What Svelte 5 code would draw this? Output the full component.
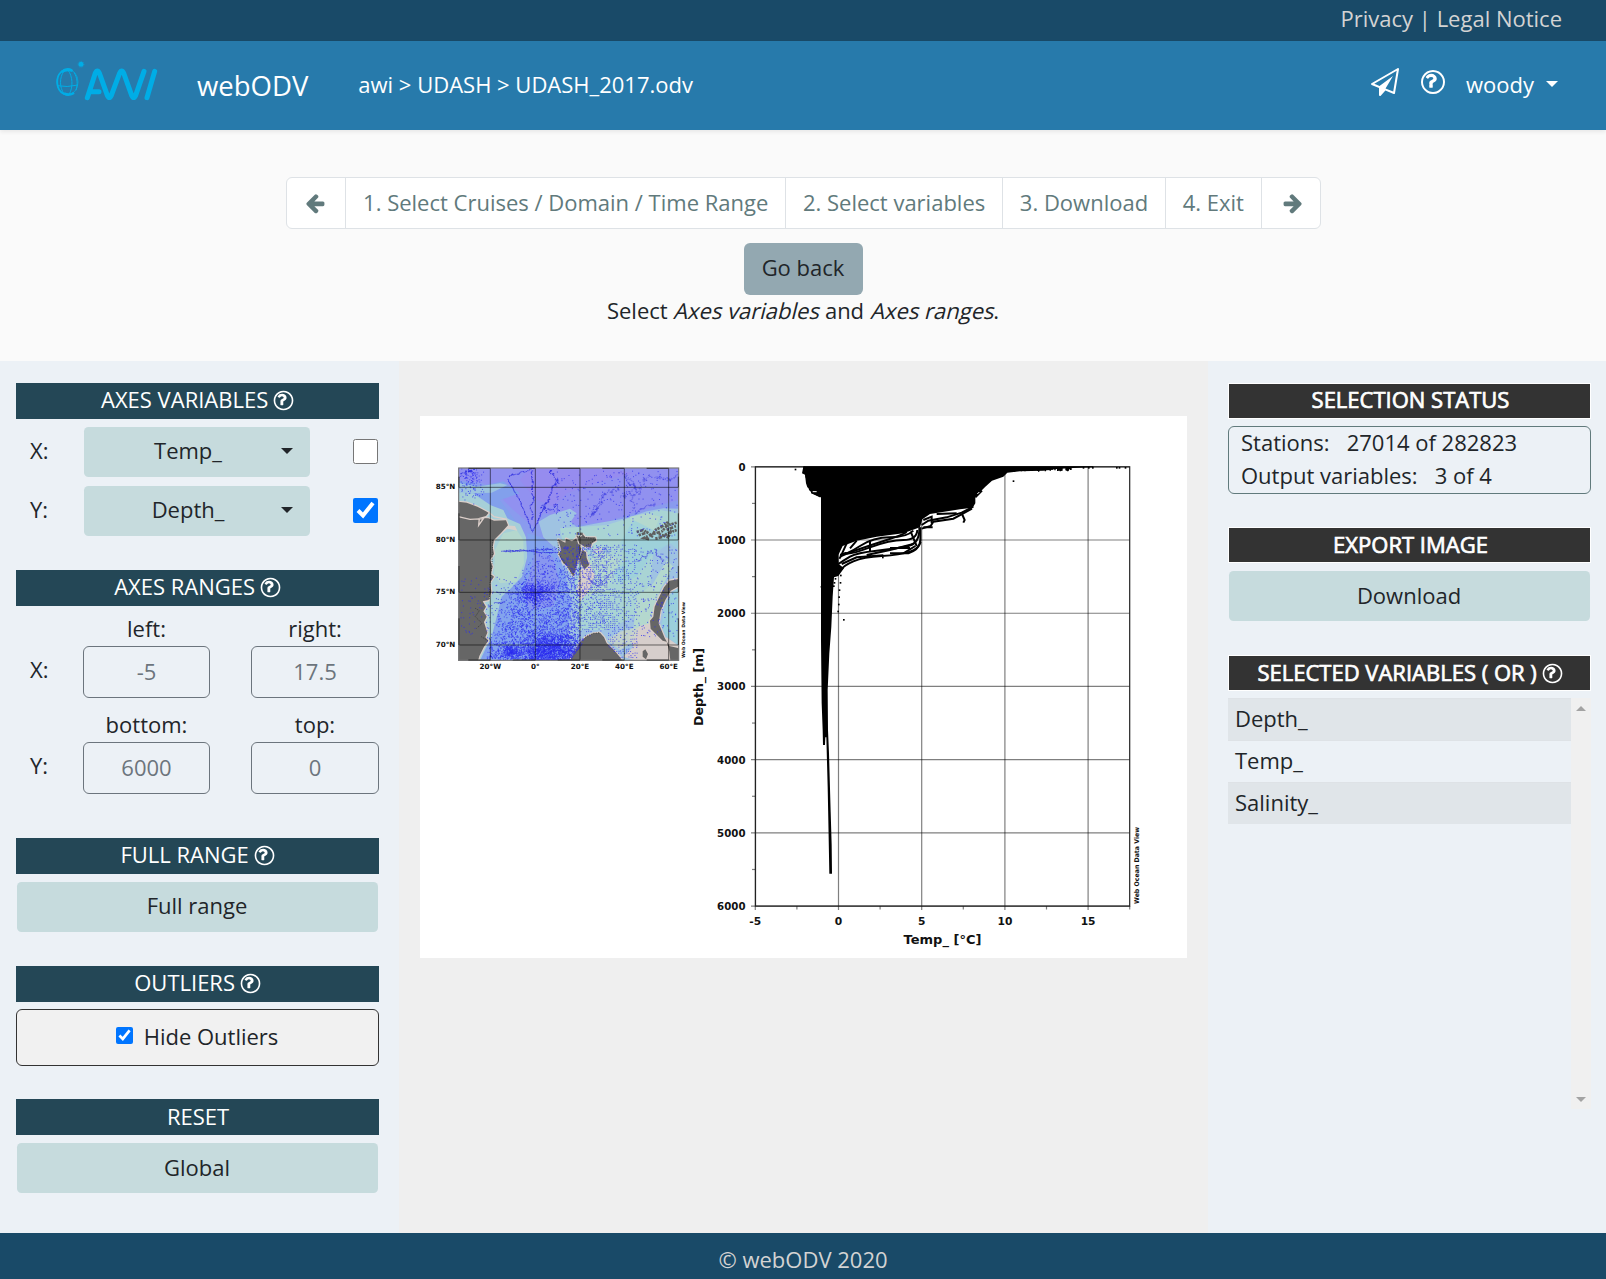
<script>
  const steps = ['1. Select Cruises / Domain / Time Range', '2. Select variables', '3. Download', '4. Exit'];
  const variables = ['Depth_', 'Temp_', 'Salinity_'];

  const depthTicks = [0, 1000, 2000, 3000, 4000, 5000, 6000];
  const tempTicks = [-5, 0, 5, 10, 15];
  const depthY = (d) => 466.8 + (d / 6000) * 439.3;
  const tempX = (t) => 755.3 + ((t + 5) / 22.5) * 374.4;

  const lats = [[85, 112], [80, 270], [75, 427], [70, 585]];
  const lons = [['20°W', 211], ['0°', 346], ['20°E', 480], ['40°E', 613], ['60°E', 746]];

  // Deterministic generator so that the station dots are stable between renders.
  let seed = 1234567;
  function rnd() {
    seed = (seed * 1103515245 + 12345) % 2147483648;
    return seed / 2147483648;
  }
  const gauss = () => rnd() + rnd() + rnd() - 1.5;
  const dot = (x, y) => `M${x.toFixed(1)} ${y.toFixed(1)}h3`;

  function scatter(n, x0, y0, x1, y1, keep) {
    let d = '';
    for (let i = 0; i < n; i++) {
      const x = x0 + rnd() * (x1 - x0);
      const y = y0 + rnd() * (y1 - y0);
      if (!keep || rnd() < keep(x, y)) d += dot(x, y);
    }
    return d;
  }
  function cluster(n, cx, cy, sx, sy) {
    let d = '';
    for (let i = 0; i < n; i++) d += dot(cx + gauss() * sx, Math.min(629, cy + gauss() * sy));
    return d;
  }
  function track(x, y, dx, dy, n, wobble) {
    let d = '';
    for (let i = 0; i < n; i++) {
      x += dx + (rnd() - 0.5) * wobble;
      y += dy + (rnd() - 0.5) * wobble;
      d += dot(x, y);
    }
    return d;
  }
  // Regular survey grid of the Barents Sea.
  function survey() {
    let d = '';
    for (let x = 468; x < 650; x += 6)
      for (let y = 285; y < 625; y += 6)
        if (rnd() < 0.72 - Math.abs(x - 540) / 260 && (y < 545 || x > 560)) d += dot(x + rnd() * 2, y + rnd() * 2);
    return d;
  }

  const stations =
    scatter(5600, 200, 290, 480, 630, (x, y) => {
      const edge = Math.min(1, Math.max(0, (x - (330 - (y - 290) * 0.5)) / 60));
      return edge * (0.22 + (y - 290) / 480);
    }) +
    cluster(420, 345, 428, 52, 34) +
    cluster(200, 272, 604, 22, 16) +
    cluster(1500, 390, 600, 90, 48) +
    cluster(130, 150, 95, 35, 50) +
    scatter(260, 430, 290, 560, 520) +
    scatter(420, 400, 60, 770, 260, () => 0.55) +
    scatter(200, 640, 290, 770, 560) +
    scatter(150, 120, 380, 330, 560) +
    survey();

  const iceTracks =
    track(262, 84, 1.6, 3.2, 26, 3) + track(300, 160, 1.5, 2.8, 28, 3) +
    track(264, 82, 3, -0.3, 24, 5) + track(335, 60, -0.1, 3.2, 55, 6) +
    track(385, 58, 1.2, 1.3, 25, 8) + track(412, 90, -0.9, 2, 42, 7) +
    track(370, 172, 1, 0.3, 30, 12) + track(335, 245, 0.8, -2, 36, 4) +
    track(240, 304, 3.4, 0, 50, 2) + track(250, 302, 3.4, 0, 42, 3) +
    track(225, 427, 3.4, 0, 64, 2) + track(220, 460, 3, -0.1, 12, 3) +
    track(120, 70, 2, 0.2, 24, 9);

  const thinTracks =
    track(590, 62, 1.2, 1.2, 40, 10) + track(690, 80, -1.6, 0.9, 60, 10) +
    track(600, 120, -1.2, 0.7, 60, 9) + track(540, 160, -0.3, 1.3, 50, 8) +
    track(612, 70, -0.2, 2, 60, 8) + track(640, 195, 1.6, -1, 35, 7) +
    track(700, 80, 1.6, 0.4, 45, 8) + track(695, 300, -1.4, 1.4, 30, 5) +
    track(705, 300, 1.1, 1.5, 30, 5) + track(575, 365, -1.2, 1.4, 24, 4) +
    track(505, 385, 1.3, 1.1, 20, 4);

  function fringe() {
    let d = '';
    for (let i = 0; i < 60; i++) d += `M${(960 + rnd() * 190).toFixed(0)} 84v${(3 + rnd() * 8).toFixed(0)}`;
    for (let i = 0; i < 36; i++) d += `M${(338 + i * 0.5 + rnd() * 5).toFixed(0)} ${82 + i * 2}h5`;
    return d;
  }
  const fringePath = fringe();
  const outliers = [[316, 88], [970, 123], [452, 406], [451, 428], [448, 450], [447, 471], [446, 493], [444, 514], [461, 539],
    [1180, 83], [1196, 83], [1208, 83], [1280, 83], [1288, 83], [1306, 83], [394, 440], [395, 380], [431, 438], [433, 428], [436, 416], [641, 272], [578, 352]];

  const land = [
    'M110 155L140 158L172 170L206 188L198 198L176 204L205 205L222 212L258 211L264 226L240 252L222 270L218 290L222 312L210 330L218 350L212 372L222 380L210 398L214 424L206 450L188 454L198 470L190 484L200 500L192 516L202 548L196 562L205 572L192 590L178 618L172 640H110Z',
    'M414 268L436 278L438 266L456 274L470 264L484 272L480 290L490 304L484 320L474 330L470 345L460 378L450 362L440 346L430 340L416 312L424 300Z',
    'M470 258L484 262L488 252L496 262L526 262L528 272L516 280L512 292L494 290L478 280ZM486 300L498 306L500 324L508 344L494 358L484 344L480 324Z',
    'M446 640L462 608L480 578L498 560L520 550L540 548L552 562L560 580L582 600L600 622L612 640Z',
    'M782 640H752L748 604L740 575L728 572L692 536L690 512L700 500L704 470L718 440L732 412L748 392L782 386V406L752 422L736 450L722 482L716 520L734 564L748 588L782 596ZM668 604L676 598L684 612L678 628L668 620Z',
  ];
</script>

{#snippet help(cls)}
  <svg class={cls} viewBox="0 0 1792 1792" aria-hidden="true"><path fill="currentColor" d="M880 1072v160q0 14-9 23t-23 9h-160q-14 0-23-9t-9-23v-160q0-14 9-23t23-9h160q14 0 23 9t9 23zM1136 672q0 50-15 90t-45.500 69-52 44-59.500 36q-32 18-46.500 28t-26 24-11.500 29v32q0 14-9 23t-23 9h-160q-14 0-23-9t-9-23v-68q0-35 10.500-64.500t24-47.500 39-35.500 41-25.500 44.500-21q53-25 75-43t22-49q0-42-43.500-71.500t-95.500-29.500q-56 0-95 27-29 20-80 83-9 12-25 12-11 0-19-6l-108-82q-10-7-12-20t5-23q122-192 349-192 129 0 238.500 89.500t109.500 214.500zM896 256q-130 0-248.500 51t-204 136.500-136.500 204-51 248.500 51 248.500 136.500 204 204 136.500 248.500 51 248.500-51 204-136.500 136.500-204 51-248.500-51-248.500-136.500-204-204-136.500-248.500-51zM1664 896q0 209-103 385.500t-279.500 279.500-385.500 103-385.500-103-279.500-279.500-103-385.500 103-385.500 279.500-279.500 385.500-103 385.500 103 279.500 279.500 103 385.500z" /></svg>
{/snippet}

{#snippet arrow(cls)}
  <svg class="arrow {cls}" viewBox="0 0 1792 1792" aria-hidden="true"><path fill="currentColor" d="M1664 896v128q0 53-32.500 90.500t-84.500 37.500h-704l293 294q38 36 38 90t-38 90l-75 76q-37 37-90 37-52 0-91-37l-651-652q-37-37-37-90 0-52 37-91l651-650q38-38 91-38 52 0 90 38l75 74q38 38 38 91t-38 91l-293 293h704q52 0 84.500 37.500t32.500 90.500z" /></svg>
{/snippet}

<div class="page">
  <div class="topbar"><span>Privacy | Legal Notice</span></div>

  <header class="nav">
    <svg class="logo" viewBox="0 0 345 165" aria-label="AWI">
      <g fill="none" stroke="#00ade6">
        <ellipse cx="52" cy="81" rx="32" ry="39" stroke-width="2" />
        <path stroke-width="5" d="M66 45A32 39 0 1 0 72 113" />
        <path stroke-width="3" d="M42 48C28 66 28 98 42 116M54 46C68 62 70 96 58 117M72 52C82 68 84 88 78 106M22 92Q50 98 84 90" />
        <path stroke-width="7" d="M34 51Q52 41 68 48M42 115Q58 122 72 114" />
        <circle cx="93" cy="28" r="7.500" fill="#00ade6" stroke="none" />
        <circle cx="93" cy="28" r="9" stroke-width="1.500" stroke-dasharray="3 3" />
        <path stroke-width="15" stroke-linecap="round" stroke-linejoin="round" d="M112 128L136 54Q142 42 148 54L172 121Q178 134 184 121L209 54Q215 42 221 54L245 121Q251 134 257 121L282 49M124 110H147M314 49L291 128" />
      </g>
    </svg>
    <span class="brand">webODV</span>
    <span class="crumbs">awi &gt; UDASH &gt; UDASH_2017.odv</span>
    <div class="tools">
      <svg class="plane" viewBox="0 0 1792 1792" aria-hidden="true"><path fill="currentColor" d="M1764 11q33 24 27 64l-256 1536q-5 29-32 45-14 8-31 8-11 0-24-5l-527-215-298 327q-18 21-47 21-14 0-23-4-19-7-30-23.500t-11-36.500v-452l-472-193q-37-14-40-55-3-39 32-59l1664-960q35-21 68 2zM1422 1505l221-1323-1434 827 336 137 863-639-478 797z" /></svg>
      {@render help('nav-help')}
      <span class="user">woody</span>
      <i class="caret"></i>
    </div>
  </header>

  <section class="wizard">
    <div class="pager">
      <span class="step end prev">{@render arrow('')}</span>
      {#each steps as s}<span class="step">{s}</span>{/each}
      <span class="step end next">{@render arrow('flip')}</span>
    </div>
    <button class="back">Go back</button>
    <p class="hint">Select <em>Axes variables</em> and <em>Axes ranges</em>.</p>
  </section>

  <main>
    <aside class="left">
      <h2>AXES VARIABLES {@render help('hq')}</h2>
      <div class="var-row">
        <span>X:</span>
        <button class="btn">Temp_<i class="caret"></i></button>
        <input type="checkbox" class="big" />
      </div>
      <div class="var-row second">
        <span>Y:</span>
        <button class="btn">Depth_<i class="caret"></i></button>
        <input type="checkbox" class="big" checked />
      </div>

      <h2 class="ranges-head">AXES RANGES {@render help('hq')}</h2>
      <div class="range">
        <span></span><label for="xl">left:</label><label for="xr">right:</label>
        <span class="axis">X:</span><input id="xl" placeholder="-5" /><input id="xr" placeholder="17.5" />
      </div>
      <div class="range">
        <span></span><label for="yb">bottom:</label><label for="yt">top:</label>
        <span class="axis">Y:</span><input id="yb" placeholder="6000" /><input id="yt" placeholder="0" />
      </div>

      <h2 class="full-head">FULL RANGE {@render help('hq')}</h2>
      <button class="btn wide">Full range</button>

      <h2 class="gap">OUTLIERS {@render help('hq')}</h2>
      <label class="outliers"><input type="checkbox" checked /><span>Hide Outliers</span></label>

      <h2 class="reset-head">RESET</h2>
      <button class="btn wide low">Global</button>
    </aside>

    <div class="canvas">
      <svg class="plot" viewBox="420 416 767 542">
        <rect x="420" y="416" width="767" height="542" fill="#fff" />

        <g transform="translate(420 450) scale(.33333)">
          <clipPath id="mapclip"><rect x="115" y="54" width="662" height="578" /></clipPath>
          <g clip-path="url(#mapclip)">
            <rect x="115" y="54" width="662" height="578" fill="#8a9bee" />
            <path fill="#9191f0" d="M115 54H777V150L700 170L640 190L560 215L470 225L420 200L370 190L345 235L322 215L280 180L240 140L190 100L115 90Z" />
            <path fill="#9a88ee" d="M330 54H560L640 70L560 90L440 130L400 170L350 150L300 90Z" opacity=".6" />
            <path fill="#82a0ec" d="M115 92L180 108L250 94L300 130L240 150L300 230L318 280L320 330L300 420L240 500L230 632H115Z" />
            <path fill="#9dc4e0" d="M115 98L170 110L240 100L262 105L215 128L160 130L240 185L290 235L115 170Z" />
            <path fill="#a6cfd8" d="M115 128L160 132L210 165L250 180L262 205L300 222L318 262L322 320L306 380L270 418L245 440L230 500L215 560L195 600L180 632H115Z" />
            <path fill="#83a4ee" d="M322 250L365 262L420 310L452 400L470 480L455 560L430 632H190L205 590L240 500L262 440L305 400L322 340Z" />
            <path fill="#8c8ff0" d="M345 300L400 320L420 400L400 470L330 480L310 420L330 370Z" opacity=".6" />
            <path fill="#9fc3e2" d="M356 215L390 195L450 176L470 190L452 215L470 232L540 218L620 205L680 184L730 175L777 176V632H470L440 560L455 470L438 380L412 300L370 262Z" />
            <path fill="#a9d4d4" d="M420 235L560 225L640 200L720 180L777 190V270L700 300L690 420L640 500L560 540L470 540L462 420L470 370L430 290Z" />
            <path fill="#b4d8ce" d="M225 300L250 250L290 240L310 270L312 340L290 395L240 400L222 370ZM630 200L680 190L720 200L700 250L640 250ZM650 440L700 400L740 330L760 350L720 420L700 520L640 540ZM480 360L540 300L600 330L560 420L500 440Z" />
            <path fill="#9bd0dc" d="M640 210L600 280L620 330L580 370L600 400L650 380L690 320L750 280L777 300V220L720 250Z" opacity=".75" />
            <path fill="#dccfca" d="M740 562L777 588V632H650L610 620L640 590L625 560L660 528L690 520L728 572ZM480 360L510 345L525 375L505 425L480 455L470 420ZM240 225L285 228L292 242L262 236L236 258Z" opacity=".9" />
            <path fill="#c9d6c8" d="M560 570L600 545L660 530L640 575L600 600Z" opacity=".8" />
            <path fill="#9bd0dc" d="M777 414L752 432L733 480L724 530L740 560L777 586Z" />
            {#each land as d}<path {d} fill="#666" stroke="#dccfca" stroke-width="7" stroke-linejoin="round" paint-order="stroke" />{/each}
            <path fill="none" stroke="#dccfca" stroke-width="4" d="M115 200L150 208L190 206L176 226L178 205M206 186L222 200L262 208M518 308L548 302M520 300L545 294" />
            <path fill="none" stroke="#5f5f5f" stroke-width="8" stroke-dasharray="7 3 11 4 5 2" d="M650 246L670 240L692 254L672 264L690 268M694 262L706 240L722 232L744 216M700 252L726 244L742 226L770 218M706 266L730 260L742 250L770 240M656 256L684 246M716 252L744 262L756 238M740 240L768 228M470 250L488 252" />
            <path fill="none" stroke="#2a2adf" stroke-width="2" stroke-dasharray="2 3" d="M440 322L452 360M470 330L476 290M466 346L474 320M424 290L444 300" />
            <path fill="none" stroke="#333" stroke-width="2.500" stroke-dasharray="3 4" d="M218 270L216 340L210 400L208 450M166 475L178 482L166 500L186 520L170 535M184 560L204 572M446 630L480 578L498 560L520 550L540 548M414 270L416 312L450 362L460 378L470 345L490 304M470 258L528 268L494 290" />
            <path fill="none" stroke="#2c2cf0" stroke-width="3" opacity=".75" d={stations} />
            <path fill="none" stroke="#2a2ae0" stroke-width="3" opacity=".85" d={iceTracks} />
            <path fill="none" stroke="#4444e0" stroke-width="2.500" opacity=".7" d={thinTracks} />
            <path fill="#666" d="M452 632L470 605L490 582L505 568L520 556L542 558L556 584L580 604L606 632Z" />
            {#each lats as [, y]}<path stroke="#000" stroke-opacity=".65" stroke-width="2.500" d="M115 {y}H777" />{/each}
            {#each lons as [, x]}<path stroke="#000" stroke-opacity=".65" stroke-width="2.500" d="M{x} 54V632" />{/each}
          </g>
          <rect x="116" y="54" width="660" height="577" fill="none" stroke="#777" stroke-width="3.500" />
          <path fill="none" stroke="#222" stroke-width="2.500" d="M145 55H211M278 55H346M413 55H480M547 55H613M680 55H746M145 630H211M278 630H346M413 630H480M547 630H613M680 630H746M117 80V112M117 190V270M117 348V427M117 505V585M775 80V112M775 190V270M775 348V427M775 505V585" />
          <g class="axis-text" font-size="21.500">
            {#each lats as [lat, y]}<text x="106" y={y + 6} text-anchor="end">{lat}°N</text>{/each}
            {#each lons as [lon, x]}<text {x} y="658" text-anchor="middle">{lon}</text>{/each}
            <text transform="translate(795 624) rotate(-90)" font-size="13.500" textLength="168" lengthAdjust="spacingAndGlyphs">Web Ocean Data View</text>
          </g>
        </g>

        <g stroke="#000" stroke-opacity=".5" stroke-width="1.200">
          {#each depthTicks as d}<path d="M751 {depthY(d)}H1129.700" />{/each}
          {#each tempTicks as t}<path d="M{tempX(t)} 466.500V910" />{/each}
          {#each depthTicks.slice(0, 6) as d}<path d="M752 {depthY(d + 500)}H755" />{/each}
          {#each tempTicks as t}<path d="M{tempX(t + 2.5)} 906V909.500" />{/each}
        </g>
        <rect x="755.500" y="466.800" width="374.200" height="439.300" fill="none" stroke="#222" stroke-width="1.200" />

        <g transform="translate(690 440) scale(.33333)">
          <path d="M340 80L336 100L345 104L348 130L352 142L360 148L364 160L384 168L393 172L393 600L395 790L398 870L399 915L405 915L406 892L409 892L413 1040L415 1140L418 1301L426 1301L425 1215L422 1115L417 940L414 870L413 750L418 640L424 560L428 470L432 412L445 408L462 385L446 372L445 345L458 318L500 302L560 290L640 280L690 262L697 238L720 222L810 208L848 203L856 190L856 172L866 160L874 152L886 140L906 122L940 110L952 98L990 94L1060 92L1100 87L1150 84L1210 82V79H340Z" />
          <g fill="none" stroke="#000" stroke-width="6">
            <path d="M691 262V300Q690 325 660 335T575 348T490 364T455 388" />
            <path d="M688 262Q690 310 655 318T560 332T480 350T445 372" />
            <path d="M682 270Q680 300 640 300T540 322T470 340T448 356" />
            <path d="M670 272Q650 292 600 292T510 318T450 344" />
            <path d="M650 276Q640 284 590 300T500 330T450 350" />
            <path d="M662 275L680 318M600 324H660M640 340L676 318M540 300V335M500 302L480 325M470 310L452 350" />
            <path d="M600 340H655Q685 330 692 306M530 345L600 330L670 312M455 372L500 352L580 346" />
            <path d="M695 266L722 258L730 245L790 236L820 220L846 206" />
            <path d="M695 255L715 242L770 232L815 218L850 200" />
            <path d="M700 240L725 230V250M740 222L800 220M700 262H728" />
            <path d="M816 222L824 240L820 248M856 172L876 152M858 160L868 148M364 156L392 170" />
          </g>
          <path d={fringePath} stroke="#000" stroke-width="4" fill="none" />
          <path d="M368 155h12M862 162l6-6" stroke="#fff" stroke-width="3" />
          {#each outliers as [x, y]}<rect x={x - 2} y={y - 2} width="5" height="5" />{/each}
        </g>

        <g class="axis-text" font-size="10.700">
          {#each depthTicks as d}<text x="745.500" y={depthY(d) + 4} text-anchor="end" textLength={d ? 28.4 : 7.1} lengthAdjust="spacingAndGlyphs">{d}</text>{/each}
          {#each tempTicks as t}<text x={tempX(t)} y="925" text-anchor="middle">{t}</text>{/each}
          <text x="942.500" y="943.500" font-size="13" text-anchor="middle">Temp_ [°C]</text>
          <text transform="translate(703 687) rotate(-90)" font-size="13" text-anchor="middle" textLength="78" lengthAdjust="spacingAndGlyphs">Depth_ [m]</text>
          <text transform="translate(1139 904) rotate(-90)" font-size="6.500" textLength="77" lengthAdjust="spacingAndGlyphs">Web Ocean Data View</text>
        </g>
      </svg>
    </div>

    <aside class="right">
      <h3>SELECTION STATUS</h3>
      <div class="status">
        <div>Stations: &nbsp; 27014 of 282823</div>
        <div>Output variables: &nbsp; 3 of 4</div>
      </div>
      <h3 class="export">EXPORT IMAGE</h3>
      <button class="btn wide low">Download</button>
      <h3 class="selected">SELECTED VARIABLES ( OR ) {@render help('hq')}</h3>
      <div class="list">
        <div class="rows">
          {#each variables as v}<div class="row">{v}</div>{/each}
        </div>
        <div class="scroll"><i class="up"></i><i class="down"></i></div>
      </div>
    </aside>
  </main>

  <footer>© webODV 2020</footer>
</div>

<style>
  :global(body) { margin: 0; background: #fafafa; }
  .page {
    width: 1606px;
    height: 1279px;
    display: flex;
    flex-direction: column;
    overflow: hidden;
    font: 22px/33px "Open Sans", sans-serif;
    color: #212529;
  }
  .page * { box-sizing: border-box; }
  button, input { font: inherit; color: inherit; }
  .topbar {
    height: 41px;
    background: #194a68;
    color: #d3d3d3;
    display: flex;
    justify-content: flex-end;
    padding: 2px 44px 0 0;
  }
  .nav {
    height: 89px;
    flex: none;
    background: #277aab;
    color: #fff;
    display: flex;
    align-items: center;
    padding: 0 48px 0 50px;
    box-shadow: 0 2px 4px rgba(0, 0, 0, .075);
    position: relative;
  }
  .logo { width: 115px; height: 55px; margin-top: -6px; }
  .brand { font-size: 27.5px; margin-left: 32px; }
  .crumbs { margin: -2px 0 0 50px; }
  .tools { margin-left: auto; display: flex; align-items: center; }
  .plane { width: 28px; height: 28px; margin: -7px 20px 0 0; }
  .nav-help { width: 28px; height: 28px; margin: -7px 19px 0 0; }
  .caret {
    display: block;
    border: 6.5px solid transparent;
    border-top-color: currentColor;
    border-bottom: 0;
  }
  .user { margin-top: -2px; }
  .user + .caret { margin: -3px 0 0 12px; }

  .wizard {
    height: 231px;
    flex: none;
    padding-top: 47px;
    display: flex;
    flex-direction: column;
    align-items: center;
  }
  .pager {
    display: flex;
    height: 52px;
    background: #fff;
    border: 1px solid #dee2e6;
    border-radius: 6px;
    color: #617a7c;
    margin-left: 1px;
  }
  .step { padding: 0 16.8px; line-height: 49px; white-space: nowrap; }
  .step + .step { border-left: 1px solid #dee2e6; }
  .end { display: flex; align-items: center; justify-content: center; width: 58px; padding: 0; }
  .prev { padding-right: 3px; }
  .next { padding-left: 4px; width: 59px; }
  .arrow { width: 22px; height: 22px; }
  .flip { transform: scaleX(-1); }
  .back {
    margin-top: 14px;
    width: 119px;
    height: 52px;
    border: 0;
    border-radius: 6px;
    padding: 0 0 3px;
    background: #93a8b1;
  }
  .hint { margin: -1px 0 0; }
  /* The upright face is slanted, which keeps its wider letterforms. */
  .hint em { display: inline-block; font-style: normal; transform: translateX(2px) skewX(-14deg); }

  main { height: 872px; flex: none; display: flex; }
  .left { width: 399px; background: #ecf1f6; padding: 22px 20px 0 16px; }
  h2, h3 {
    margin: 0;
    height: 36px;
    font-size: 22px;
    font-weight: 400;
    line-height: 32px;
    text-align: center;
    color: #fff;
    white-space: nowrap;
  }
  h2 { background: #244756; padding-left: 1px; }
  h3 { background: #333; border: 1px solid #fff; line-height: 30px; padding-left: 2px; -webkit-text-stroke: .7px #fff; }
  .page :global(.hq) { width: 23px; height: 23px; vertical-align: -3.5px; margin-left: -2px; }
  .var-row { display: flex; align-items: center; height: 50px; margin-top: 8px; padding: 0 1px 0 14px; }
  .var-row > span { width: 54px; margin-top: -4px; }
  .var-row.second { margin-top: 9px; }
  .btn {
    position: relative;
    width: 226px;
    height: 50px;
    border: 0;
    border-radius: 4.5px;
    background: #c6dbdd;
    padding: 0 18px 3px 0;
  }
  .btn .caret { position: absolute; right: 17px; top: 21px; }
  .wide { display: block; width: calc(100% - 2px); margin: 8px 1px 0; padding: 0 1px 3px 0; }
  .low { padding-bottom: 1px; }
  .big { width: 25px; height: 25px; margin: -2px 0 0 auto; }
  .ranges-head { margin-top: 34px; }
  .range {
    display: grid;
    grid-template-columns: 67px 127px 128px;
    grid-template-rows: 34px 52px;
    height: 96px;
    padding-top: 6px;
  }
  .range > :nth-child(3n) { margin-left: 41px; width: 128px; }
  .range label { text-align: center; height: 34px; }
  .range input {
    width: 127px;
    height: 52px;
    border: 1px solid #6c757d;
    border-radius: 6px;
    background: transparent;
    text-align: center;
    padding: 0 0 2px;
  }
  .range input::placeholder { color: #6c757d; opacity: 1; }
  .axis { padding: 7px 0 0 14px; }
  .full-head { margin-top: 40px; }
  .gap { margin-top: 34px; }
  .outliers {
    display: flex;
    align-items: center;
    justify-content: center;
    height: 57px;
    margin-top: 7px;
    padding-right: 1px;
    border: 1px solid #333;
    border-radius: 6px;
    background: #f1f1f1;
  }
  .outliers input { width: 17px; height: 17px; margin: -4px 11px 0 0; }
  .outliers span { margin-top: -2px; }
  .reset-head { margin-top: 33px; line-height: 35px; }

  .canvas { width: 809px; background: #efefef; padding: 55px 0 0 21px; }
  .plot { display: block; width: 767px; height: 542px; }
  .axis-text { font-family: "DejaVu Sans", sans-serif; font-weight: 700; fill: #111; }

  .right { width: 398px; background: #ecf1f6; padding: 22px 15px 0 20px; }
  .status {
    height: 68px;
    margin-top: 7px;
    padding: 0 12px;
    border: 1px solid #617a7c;
    border-radius: 6px;
  }
  .status div { position: relative; top: -1px; }
  .export { margin-top: 33px; line-height: 32px; }
  .selected { margin-top: 34px; line-height: 32px; }
  .list { display: flex; height: 411px; margin-top: 7px; }
  .rows { flex: 1; }
  .row {
    height: 42px;
    border-top: 1px solid #dee2e6;
    padding: 3px 7px;
  }
  .row:nth-child(odd) { background: #e0e5e9; }
  .scroll {
    width: 20px;
    background: #f0f0f0;
    display: flex;
    flex-direction: column;
    align-items: center;
    justify-content: space-between;
    padding: 8px 0 7px;
  }
  .scroll i { border: 5px solid transparent; }
  .scroll .up { border-top: 0; border-bottom-color: #a3a3a3; }
  .scroll .down { border-bottom: 0; border-top-color: #a3a3a3; }

  footer {
    height: 46px;
    background: #194a68;
    color: #d3d3d3;
    text-align: center;
    padding-top: 10px;
  }
</style>
